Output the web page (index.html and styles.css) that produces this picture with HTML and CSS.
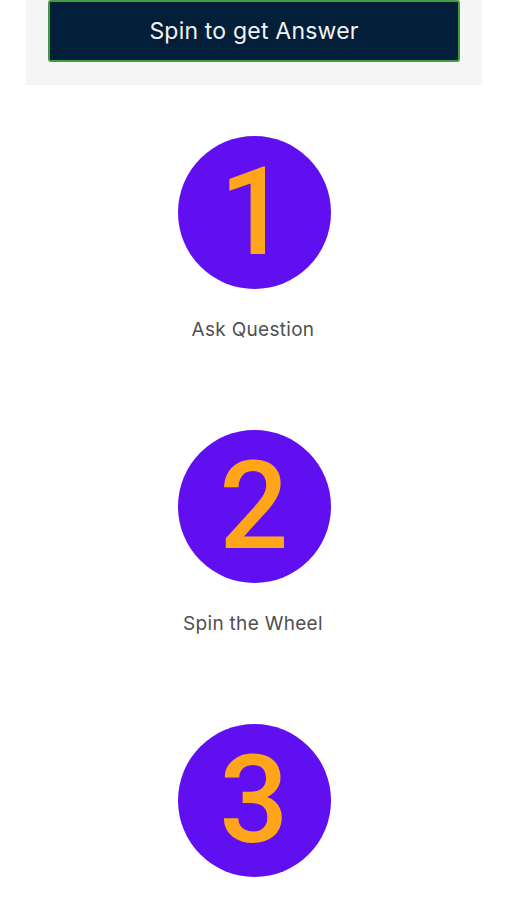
FILE: index.html
```html
<!DOCTYPE html>
<html lang="en">
<head>
    <meta charset="UTF-8">
    <meta name="viewport" content="width=device-width, initial-scale=1.0">
    <title>Magic Wheel</title>
    <link rel="stylesheet" href="styles.css">
</head>
<body>
    <div class="panel">
        <button class="spin-btn">Spin to get Answer</button>
    </div>

    <div class="steps">
        <div class="step">
            <div class="circle">1</div>
            <p class="label">Ask Question</p>
        </div>
        <div class="step">
            <div class="circle">2</div>
            <p class="label">Spin the Wheel</p>
        </div>
        <div class="step">
            <div class="circle">3</div>
            <p class="label">Get Answer</p>
        </div>
    </div>
</body>
</html>
```

FILE: styles.css
```css
body {
    margin: 0;
    background: #ffffff;
    font-family: Inter, "Liberation Sans", sans-serif;
}

.panel {
    margin: 0 24px 0 26px;
    padding: 0 22px 23px;
    background: #f5f5f5;
}

.spin-btn {
    display: block;
    width: 100%;
    height: 62px;
    background: #021e38;
    border: 2px solid #3f9c3f;
    border-radius: 3px;
    color: #f2f2f2;
    font-family: Inter, "Liberation Sans", sans-serif;
    font-size: 23px;
    letter-spacing: 0.2px;
    padding: 0;
}

.steps {
    display: flex;
    flex-direction: column;
    align-items: center;
    padding-top: 51px;
    gap: 89px;
}

.step {
    display: flex;
    flex-direction: column;
    align-items: center;
}

.circle {
    width: 153px;
    height: 153px;
    margin-left: 2px;
    border-radius: 50%;
    background: #600ff0;
    color: #ffa51a;
    font-family: Roboto, sans-serif;
    font-weight: 500;
    font-size: 122px;
    line-height: 153px;
    text-align: center;
}

.label {
    margin: 30px 0 0;
    line-height: 22px;
    font-size: 19px;
    letter-spacing: 0.3px;
    color: #505050;
}
```
